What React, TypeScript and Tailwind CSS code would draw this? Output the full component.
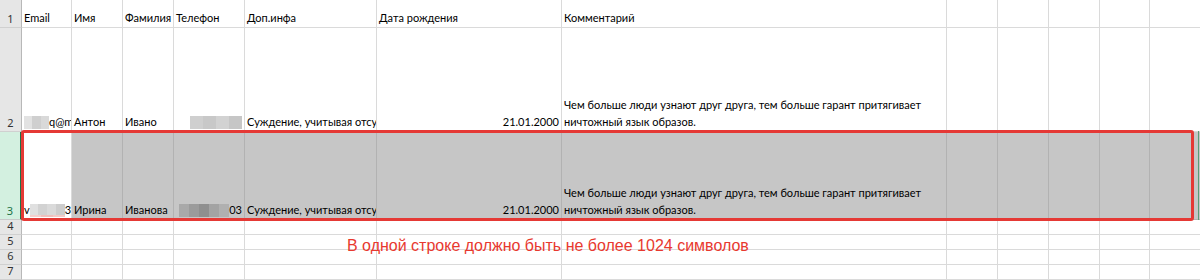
import React from "react";

const COLS = [50, 51, 51, 71, 132, 185, 385, 51, 51, 51, 50, 51];
const ROWH = [28, 104, 88, 15, 15, 15, 15];

function Blur({ colors, w, h = 12 }: { colors: string[]; w: number; h?: number }) {
  return (
    <span className="inline-flex align-bottom shrink-0" style={{ width: w, height: h }}>
      {colors.map((c, i) => (
        <span key={i} className="block h-full flex-1" style={{ background: c }} />
      ))}
    </span>
  );
}

type CellDef = { content?: React.ReactNode; align?: "left" | "right" };

function Row({
  idx,
  height,
  cells,
  selected,
}: {
  idx: number;
  height: number;
  cells: CellDef[];
  selected?: boolean;
}) {
  return (
    <div className="flex" style={{ height }}>
      <div
        className={
          selected
            ? "w-[22px] shrink-0 border-b border-r-2 border-b-[#c9c9c9] border-r-[#217346] bg-[#d3f0e0] text-[#217346] flex items-end justify-center pb-[1px] text-[11px] leading-[15px] font-['Noto_Sans',sans-serif]"
            : "w-[22px] shrink-0 border-b border-r border-b-[#d0d0d0] border-r-[#b8b8b8] bg-[#e6e6e6] text-[#333] flex items-end justify-center pb-[1px] text-[11px] leading-[15px] font-['Noto_Sans',sans-serif]"
        }
      >
        {idx}
      </div>
      {COLS.map((w, i) => {
        const c = cells[i] || {};
        const gray = selected && i > 0;
        return (
          <div
            key={i}
            className={
              (gray
                ? "bg-[#c6c6c6] border-r-[#b2b2b2] border-b-[#b2b2b2] "
                : "bg-white border-r-[#dadada] border-b-[#dadada] ") +
              "shrink-0 border-r border-b overflow-hidden whitespace-nowrap flex items-end px-[2px] pb-[2px] text-[11px] leading-[15px] text-black " +
              (c.align === "right" ? "justify-end" : "justify-start")
            }
            style={{ width: w }}
          >
            {c.content}
          </div>
        );
      })}
    </div>
  );
}

function Comment() {
  return (
    <div className="leading-[17px] -mb-[1px]">
      <div>Чем больше люди узнают друг друга, тем больше гарант притягивает</div>
      <div>ничтожный язык образов.</div>
    </div>
  );
}

export default function App() {
  const header: CellDef[] = [
    { content: "Email" },
    { content: "Имя" },
    { content: "Фамилия" },
    { content: "Телефон" },
    { content: "Доп.инфа" },
    { content: "Дата рождения" },
    { content: "Комментарий" },
  ];
  const r2: CellDef[] = [
    {
      content: (
        <span className="flex items-end">
          <Blur colors={["#e2e2e2", "#cfcfcf", "#d9d9d9"]} w={25} h={13} />
          <span>q@mail.ru</span>
        </span>
      ),
    },
    { content: "Антон" },
    { content: "Ивано" },
    {
      content: <Blur colors={["#cfcfcf", "#c8c8c8", "#d2d2d2", "#c6c6c6"]} w={52} h={13} />,
      align: "right",
    },
    { content: "Суждение, учитывая отсутствие" },
    { content: "21.01.2000", align: "right" },
    { content: <Comment /> },
  ];
  const r3: CellDef[] = [
    {
      content: (
        <span className="flex items-end">
          <span>v</span>
          <span className="inline-flex flex-col">
            <Blur colors={["#e0e0e0", "#d2d2d2", "#dadada", "#cdcdcd"]} w={35} h={11} />
            <Blur colors={["#f4cfcd", "#eec0bd", "#f2cac7"]} w={35} h={2} />
          </span>
          <span>3@mail.ru</span>
        </span>
      ),
    },
    { content: "Ирина" },
    { content: "Иванова" },
    {
      content: (
        <span className="flex items-end">
          <Blur colors={["#a9a9a9", "#9b9b9b", "#8f8f8f", "#a3a3a3", "#b0b0b0"]} w={50} h={13} />
          <span>03</span>
        </span>
      ),
      align: "right",
    },
    { content: "Суждение, учитывая отсутствие" },
    { content: "21.01.2000", align: "right" },
    { content: <Comment /> },
  ];

  return (
    <div className="relative w-[1200px] h-[280px] overflow-hidden bg-white font-['Lato','Liberation_Sans',sans-serif]">
      <Row idx={1} height={ROWH[0]} cells={header} />
      <Row idx={2} height={ROWH[1]} cells={r2} />
      <Row idx={3} height={ROWH[2]} cells={r3} selected />
      <Row idx={4} height={ROWH[3]} cells={[]} />
      <Row idx={5} height={ROWH[4]} cells={[]} />
      <Row idx={6} height={ROWH[5]} cells={[]} />
      <Row idx={7} height={ROWH[6]} cells={[]} />

      {/* selection edge */}
      <div className="absolute left-[1198px] top-[131px] w-[1px] h-[89px] bg-[#5a9e76]" />

      {/* red annotation frame */}
      <div className="absolute left-[21px] top-[130px] w-[1173px] h-[91px] border-[3px] border-[#e53935] rounded-[3px]" />

      {/* red annotation text */}
      <div className="absolute left-[347px] top-[236px] text-[16px] leading-[20px] text-[#e8392f] font-['Liberation_Sans',Arial,sans-serif] whitespace-nowrap">
        В одной строке должно быть не более 1024 символов
      </div>
    </div>
  );
}
